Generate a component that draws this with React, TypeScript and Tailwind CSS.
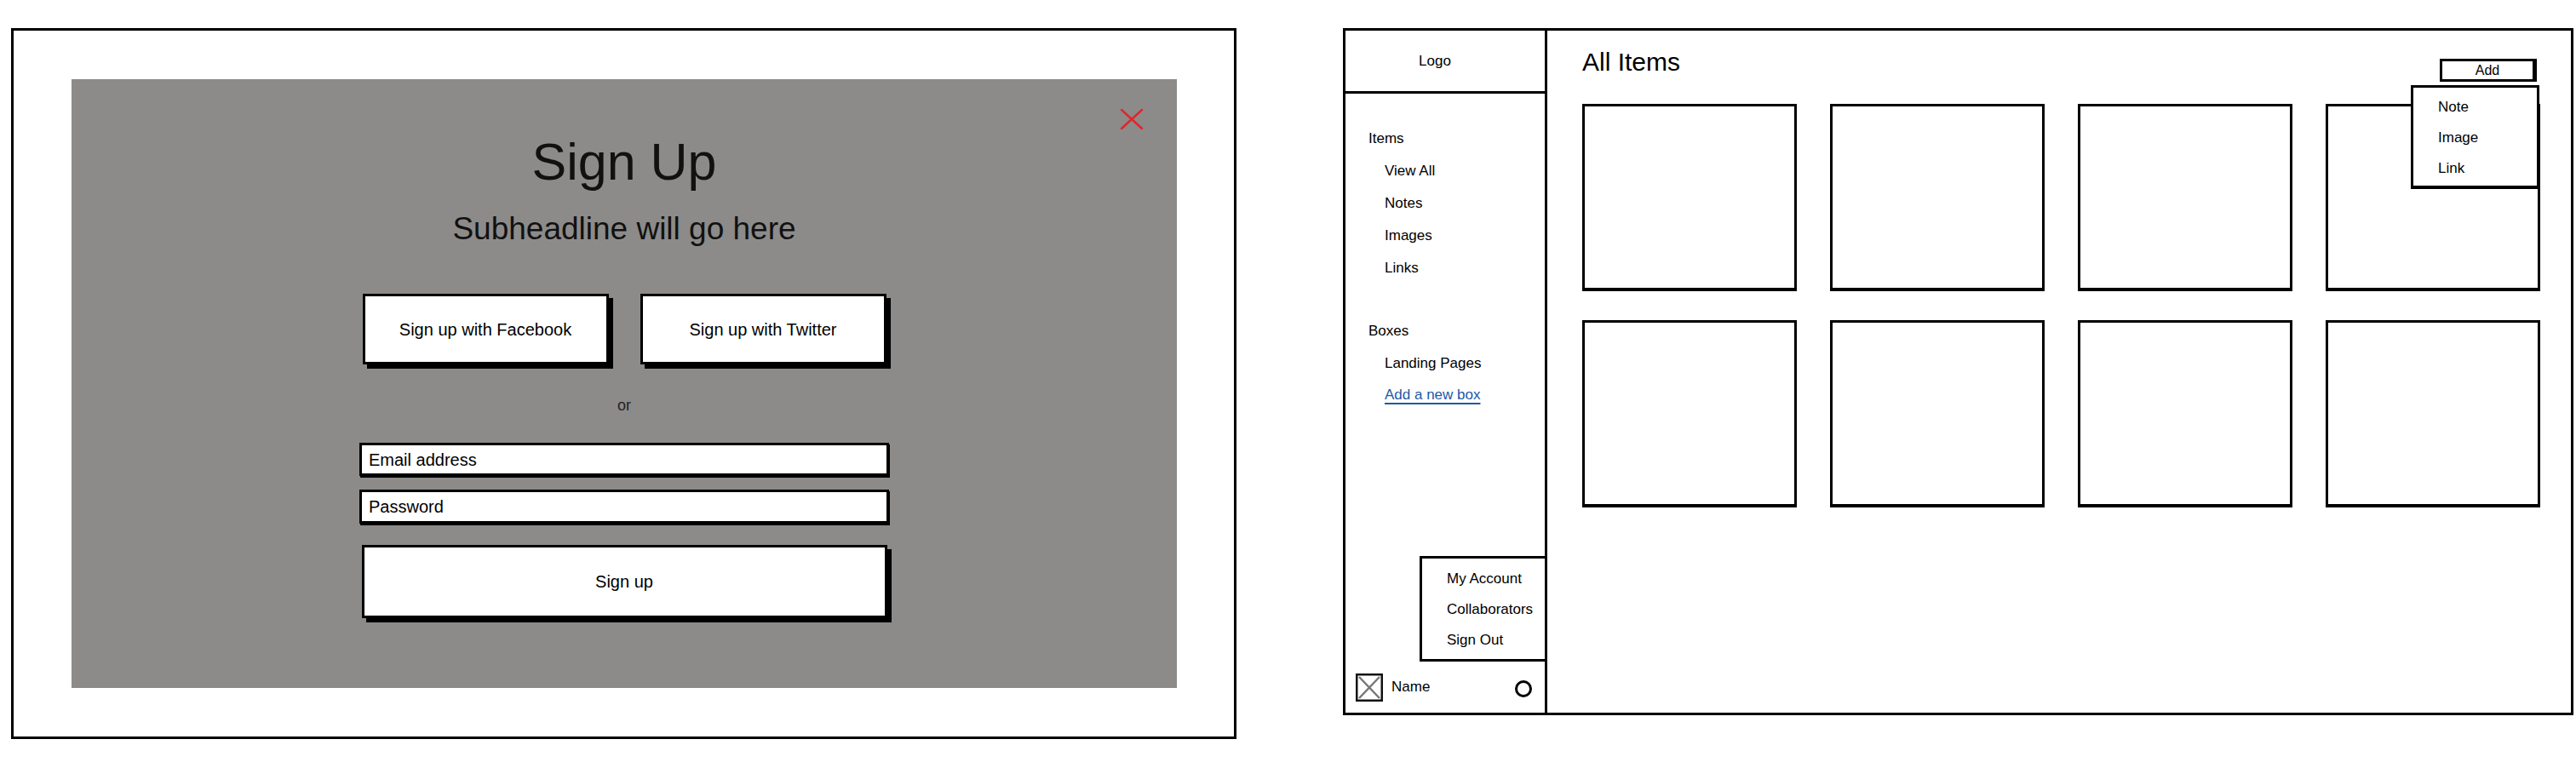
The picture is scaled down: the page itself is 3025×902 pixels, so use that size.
import React from "react";

const itemLinks = ["View All", "Notes", "Images", "Links"];
const addOptions = ["Note", "Image", "Link"];
const accountOptions = ["My Account", "Collaborators", "Sign Out"];
const cards = Array.from({ length: 8 }, (_, i) => i);

const SignUpFrame: React.FC = () => {
  return (
    <div className="w-[1439px] h-[835px] shrink-0 border-[3px] border-black pl-[68px] pr-[67px] py-[57px]">
      <div className="relative h-full bg-[#8c8b89] flex flex-col items-center pt-[67px]">
        {/* close icon */}
        <svg className="absolute top-[34px] right-[39px]" width="28" height="26" viewBox="0 0 28 26">
          <path d="M2 2L26 24M26 2L2 24" stroke="#e0262b" strokeWidth="2.5" strokeLinecap="round" />
        </svg>

        <h1 className="text-[61px] leading-none text-[#111]">Sign Up</h1>
        <p className="mt-[29px] text-[37px] leading-none text-[#111]">Subheadline will go here</p>

        <div className="mt-[58px] flex gap-[37px]">
          <button className="w-[289px] h-[83px] bg-white border-[3px] border-black shadow-[5px_5px_0_#000] text-[20px]">
            Sign up with Facebook
          </button>
          <button className="w-[289px] h-[83px] bg-white border-[3px] border-black shadow-[5px_5px_0_#000] text-[20px]">
            Sign up with Twitter
          </button>
        </div>

        <p className="mt-[39px] text-[18px] leading-none text-[#222]">or</p>

        <div className="mt-[35px] w-[622px] h-[39px] bg-white border-[3px] border-black shadow-[1px_2px_0_#000] flex items-center px-[8px] text-[20px]">
          Email address
        </div>
        <div className="mt-[16px] w-[622px] h-[40px] bg-white border-[3px] border-black shadow-[1px_2px_0_#000] flex items-center px-[8px] text-[20px]">
          Password
        </div>

        <button className="mt-[25px] w-[617px] h-[86px] bg-white border-[3px] border-black shadow-[5px_5px_0_#000] text-[20px]">
          Sign up
        </button>
      </div>
    </div>
  );
};

const DashboardFrame: React.FC = () => {
  return (
    <div className="w-[1445px] h-[807px] shrink-0 border-[3px] border-black flex">
      <aside className="w-[237px] shrink-0 border-r-[3px] border-black flex flex-col text-[17px]">
        <div className="h-[74px] shrink-0 border-b-[3px] border-black flex items-center justify-center pr-[24px]">
          Logo
        </div>

        <nav className="mt-[34px] pl-[27px] leading-[38px]">
          <div>Items</div>
          {itemLinks.map((link) => (
            <div key={link} className="pl-[19px]">
              {link}
            </div>
          ))}
          <div className="mt-[36px]">Boxes</div>
          <div className="pl-[19px]">Landing Pages</div>
          <div className="pl-[19px] leading-[36px]">
            <span className="text-[#1a5aa8] underline underline-offset-[4px] decoration-[1.5px]">Add a new box</span>
          </div>
        </nav>

        <div className="flex-1" />

        <div className="ml-auto w-[147px] border-l-[3px] border-t-[3px] border-b-[3px] border-black pl-[29px] pt-[6px] pb-[4px] leading-[36px]">
          {accountOptions.map((opt) => (
            <div key={opt}>{opt}</div>
          ))}
        </div>

        <div className="h-[60px] shrink-0 flex items-center pl-[12px] pr-[15px]">
          <svg width="32" height="33" viewBox="0 0 32 33">
            <rect x="1.25" y="1.25" width="29.5" height="30.5" fill="white" stroke="#111" strokeWidth="2.5" />
            <path d="M4 4L28 29M28 4L4 29" stroke="#777" strokeWidth="2.5" />
          </svg>
          <span className="ml-[10px]">Name</span>
          <span className="ml-auto mt-[4px] w-[20px] h-[20px] rounded-full border-[3px] border-black bg-white" />
        </div>
      </aside>

      <main className="flex-1 pl-[41px] pt-[22px]">
        <div className="w-[1125px] flex justify-between items-start">
          <h2 className="text-[30px] leading-none">All Items</h2>
          <div className="relative mt-[11px] mr-[4px]">
            <button className="w-[114px] h-[27px] bg-white border-[3px] border-r-[5px] border-black text-[16px] leading-none">
              Add
            </button>
            <div className="absolute top-[31px] right-[-3px] w-[151px] h-[122px] bg-white border-[3px] border-b-[4px] border-black pl-[29px] pt-[5px] text-[17px] leading-[36px]">
              {addOptions.map((opt) => (
                <div key={opt}>{opt}</div>
              ))}
            </div>
          </div>
        </div>

        <div className="mt-[26px] grid grid-cols-[repeat(4,252px)] gap-x-[39px] gap-y-[34px]">
          {cards.map((c) => (
            <div key={c} className="h-[220px] border-[3px] border-b-[4px] border-black bg-white" />
          ))}
        </div>
      </main>
    </div>
  );
};

const App: React.FC = () => {
  return (
    <div className="w-[3025px] h-[902px] bg-white flex items-start gap-[125px] pl-[13px] pt-[33px] font-['Liberation_Sans',Arial,sans-serif] text-black">
      <SignUpFrame />
      <DashboardFrame />
    </div>
  );
};

export default App;
